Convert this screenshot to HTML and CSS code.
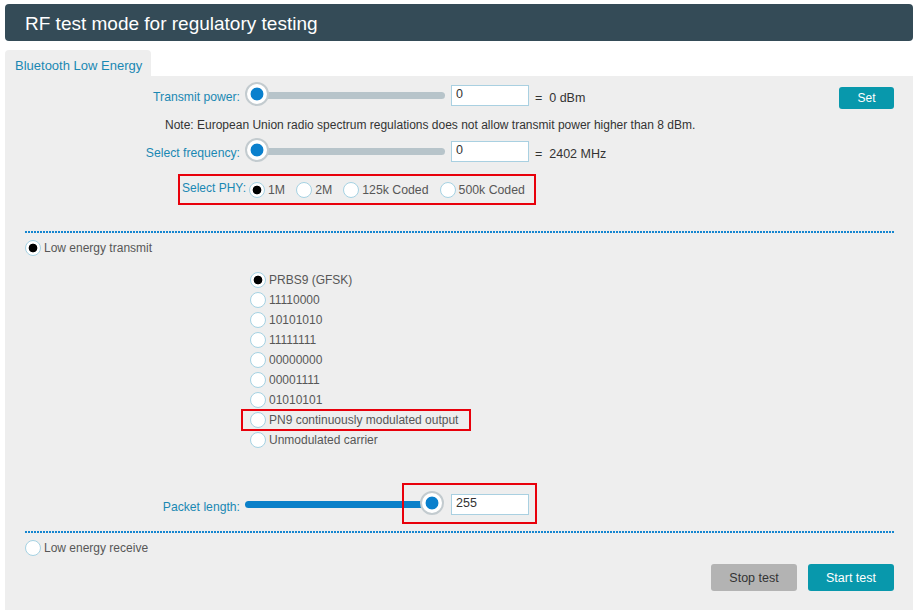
FILE: index.html
```html
<!DOCTYPE html>
<html lang="en">
<head>
<meta charset="utf-8">
<title>RF test mode for regulatory testing</title>
<link rel="stylesheet" href="styles.css">
</head>
<body>
<div class="app">
  <header class="title-bar"><h1>RF test mode for regulatory testing</h1></header>
  <nav class="tabs"><div class="tab">Bluetooth Low Energy</div></nav>
  <section class="panel">
    <div class="field-row">
      <span class="field-label">Transmit power:</span>
      <div class="slider">
        <div class="slider-track"></div>
        <span class="slider-thumb thumb-min"></span>
      </div>
      <input class="value-input" type="text" value="0">
      <span class="unit">= &nbsp;0 dBm</span>
      <button class="btn btn-set">Set</button>
    </div>
    <p class="note">Note: European Union radio spectrum regulations does not allow transmit power higher than 8 dBm.</p>
    <div class="field-row row-freq">
      <span class="field-label">Select frequency:</span>
      <div class="slider">
        <div class="slider-track"></div>
        <span class="slider-thumb thumb-min"></span>
      </div>
      <input class="value-input" type="text" value="0">
      <span class="unit">= &nbsp;2402 MHz</span>
    </div>
    <div class="phy">
      <span class="phy-label">Select PHY:</span>
      <label class="radio"><input type="radio" name="phy" checked><span>1M</span></label>
      <label class="radio"><input type="radio" name="phy"><span>2M</span></label>
      <label class="radio"><input type="radio" name="phy"><span>125k Coded</span></label>
      <label class="radio"><input type="radio" name="phy"><span>500k Coded</span></label>
    </div>
    <div class="divider"></div>
    <label class="radio mode"><input type="radio" name="mode" checked><span>Low energy transmit</span></label>
    <div class="patterns">
      <label class="radio"><input type="radio" name="pat" checked><span>PRBS9 (GFSK)</span></label>
      <label class="radio"><input type="radio" name="pat"><span>11110000</span></label>
      <label class="radio"><input type="radio" name="pat"><span>10101010</span></label>
      <label class="radio"><input type="radio" name="pat"><span>11111111</span></label>
      <label class="radio"><input type="radio" name="pat"><span>00000000</span></label>
      <label class="radio"><input type="radio" name="pat"><span>00001111</span></label>
      <label class="radio"><input type="radio" name="pat"><span>01010101</span></label>
      <label class="radio highlight"><input type="radio" name="pat"><span>PN9 continuously modulated output</span></label>
      <label class="radio"><input type="radio" name="pat"><span>Unmodulated carrier</span></label>
    </div>
    <div class="field-row row-packet">
      <span class="field-label">Packet length:</span>
      <div class="packet-controls">
        <div class="slider">
          <div class="slider-track track-full"></div>
          <span class="slider-thumb thumb-max"></span>
        </div>
        <input class="value-input" type="text" value="255">
      </div>
    </div>
    <div class="divider divider-2"></div>
    <label class="radio mode"><input type="radio" name="mode"><span>Low energy receive</span></label>
    <div class="actions">
      <button class="btn btn-stop">Stop test</button>
      <button class="btn btn-start">Start test</button>
    </div>
  </section>
</div>
</body>
</html>
```

FILE: styles.css
```css
* { box-sizing: border-box; }

html, body {
  margin: 0;
  background: #ffffff;
}

body {
  font-family: "Liberation Sans", Arial, sans-serif;
  font-size: 12px;
  color: #333;
}

.app {
  padding: 4px 5px 0 5px;
}

.title-bar {
  height: 37px;
  background: #344b57;
  border-radius: 4px;
}

.title-bar h1 {
  margin: 0;
  padding-left: 20px;
  font-size: 19px;
  font-weight: normal;
  line-height: 39px;
  color: #ffffff;
}

.tabs {
  margin-top: 9px;
  display: flex;
}

.tab {
  width: 146px;
  height: 26px;
  padding: 8px 0 0 10px;
  background: #eeeeee;
  border-radius: 4px 4px 0 0;
  color: #1a88b3;
  font-size: 13px;
}

.panel {
  height: 534px;
  background: #eeeeee;
  padding: 7px 19px 0 20px;
}

.field-row {
  display: flex;
  align-items: center;
  height: 24px;
}

.field-label {
  width: 215px;
  text-align: right;
  color: #1a88b3;
  font-size: 12.2px;
  padding-top: 4px;
}

.slider {
  position: relative;
  width: 200px;
  height: 24px;
  margin-left: 5px;
  display: flex;
  align-items: center;
}

.slider-track {
  height: 7px;
  width: 100%;
  margin-left: 12px;
  border-radius: 4px;
  background: #b7c4ca;
}

.slider-track.track-full {
  margin-left: 0;
  margin-right: 13px;
  background: #0a80c9;
}

.slider-thumb {
  position: absolute;
  top: -1px;
  width: 24px;
  height: 24px;
  border-radius: 50%;
  border: 2px solid #c3cbcf;
  background: radial-gradient(circle, #0a80cd 0 6px, #ffffff 6.8px);
}

.thumb-min { left: 0; }
.thumb-max { left: 175px; }

.value-input {
  width: 78px;
  height: 21px;
  margin: 0 0 0 6px;
  padding: 0 0 3px 4px;
  border: 1px solid #a9d0e1;
  background: #ffffff;
  font-family: "Liberation Sans", Arial, sans-serif;
  font-size: 12.5px;
  color: #333;
  outline: none;
}

.unit {
  margin-left: 6px;
  font-size: 12.5px;
  color: #333;
  padding-top: 6px;
}

.btn {
  border: none;
  border-radius: 3px;
  font-family: "Liberation Sans", Arial, sans-serif;
  cursor: pointer;
}

.btn-set {
  margin-left: auto;
  margin-top: 5px;
  width: 55px;
  height: 22px;
  background: #0898ac;
  color: #ffffff;
  font-size: 12px;
}

.note {
  margin: 10px 0 0 140px;
  line-height: 16px;
  font-size: 12px;
  color: #333;
}

.row-freq {
  margin-top: 6px;
}

.phy {
  margin: 11px 0 0 153px;
  width: 358px;
  height: 31px;
  border: 2px solid #e8000b;
  display: flex;
  align-items: center;
  gap: 11px;
  padding-left: 2px;
  white-space: nowrap;
}

.phy-label {
  flex: none;
  color: #1a88b3;
  font-size: 12px;
  margin-right: -8px;
  padding-bottom: 3px;
}

.radio {
  display: flex;
  align-items: center;
  gap: 3px;
  height: 20px;
  font-size: 12px;
  color: #575757;
  white-space: nowrap;
}

.phy .radio {
  display: inline-flex;
  flex: none;
  font-size: 12.3px;
}

.radio input {
  -webkit-appearance: none;
  appearance: none;
  width: 16px;
  height: 16px;
  margin: 0;
  border: 1px solid #a5d2e3;
  border-radius: 50%;
  background: #ffffff;
  flex: none;
}

.radio input:checked {
  background: radial-gradient(circle, #000000 0 4px, #ffffff 4.7px);
}

.divider {
  margin-top: 26px;
  height: 2px;
  margin-right: -1px;
  background-image: linear-gradient(to right, #1585cf 0 2px, transparent 2px 3px);
  background-size: 3px 2px;
}

.mode {
  margin-top: 5px;
}

.patterns {
  margin: 12px 0 0 225px;
}

.patterns .radio {
  width: max-content;
}

.highlight {
  position: relative;
}

.highlight::after {
  content: "";
  position: absolute;
  left: -9px;
  right: -13px;
  top: -1px;
  bottom: -1px;
  border: 2px solid #e8000b;
}

.row-packet {
  margin-top: 34px;
  height: 40px;
}

.row-packet .field-label {
  padding-top: 6px;
}

.packet-controls {
  position: relative;
  display: flex;
  align-items: center;
}

.packet-controls::after {
  content: "";
  position: absolute;
  left: 162px;
  right: -8px;
  top: -9px;
  bottom: -8px;
  border: 2px solid #e8000b;
}

.divider-2 {
  margin-top: 7px;
}

.actions {
  margin-top: 6px;
  display: flex;
  justify-content: flex-end;
  gap: 11px;
}

.actions .btn {
  width: 86px;
  height: 27px;
  font-size: 12.5px;
}

.btn-stop {
  background: #b3b3b3;
  color: #333;
}

.btn-start {
  background: #0898ac;
  color: #ffffff;
}
```
